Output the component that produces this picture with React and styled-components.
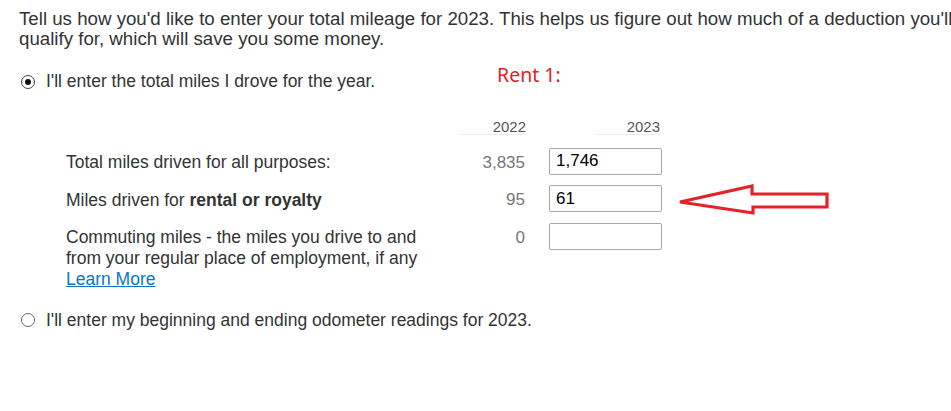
import React from "react";
import styled, { createGlobalStyle } from "styled-components";

const GlobalStyle = createGlobalStyle`
  html, body { margin: 0; padding: 0; background: #ffffff; overflow: hidden; }
  body { font-family: "Liberation Sans", Arial, sans-serif; color: #333333; }
`;

const Page = styled.div`
  position: relative;
  width: 951px;
  height: 411px;
  padding: 9px 0 0 19px;
  box-sizing: border-box;
  overflow: hidden;
`;

const Intro = styled.p`
  margin: 0;
  font-size: 18.7px;
  line-height: 20px;
  white-space: nowrap;
`;

const RadioRow = styled.label`
  display: flex;
  align-items: center;
  height: 20px;
  margin-top: ${(p) => p.$top}px;
  font-size: 17.5px;
  line-height: 20px;
`;

const RadioCircle = styled.span`
  box-sizing: border-box;
  width: 14px;
  height: 14px;
  border-radius: 50%;
  border: 1px solid ${(p) => (p.$checked ? "#444" : "#666")};
  margin: ${(p) => (p.$checked ? "1px" : "0")} 11px 0 2px;
  display: flex;
  align-items: center;
  justify-content: center;
  flex: none;
  &::after {
    content: "";
    width: 6px;
    height: 6px;
    border-radius: 50%;
    background: #111;
    display: ${(p) => (p.$checked ? "block" : "none")};
  }
`;

const Table = styled.div`
  display: grid;
  grid-template-columns: 371px 66px 113px;
  column-gap: 23px;
  row-gap: 10.5px;
  margin: 28px 0 0 47px;
  align-items: start;
`;

const HeadCell = styled.div`
  grid-column: ${(p) => p.$col};
  justify-self: end;
  width: ${(p) => p.$w}px;
  margin-right: ${(p) => p.$mr || 0}px;
  text-align: right;
  font-size: 15px;
  line-height: 15px;
  color: #555;
  border-bottom: 1px solid #ececec;
  margin-bottom: 2px;
`;

const Label = styled.div`
  grid-column: 1;
  font-size: 17.5px;
  line-height: 21px;
  padding-top: 4.5px;
  color: #333;
  white-space: nowrap;
  b { font-weight: bold; }
`;

const Prior = styled.div`
  grid-column: 2;
  text-align: right;
  font-size: 17px;
  line-height: 21px;
  padding-top: 4px;
  padding-right: 1px;
  color: #777;
`;

const Input = styled.input`
  grid-column: 3;
  box-sizing: border-box;
  width: 113px;
  height: 27px;
  border: 1px solid #a8a8a8;
  border-radius: 2px;
  padding: 0 6px;
  font-family: "Liberation Sans", Arial, sans-serif;
  font-size: 17px;
  color: #000;
  background: #fff;
  outline: none;
`;

const Link = styled.a`
  color: #0a77c6;
  text-decoration: underline;
`;

const Annotation = styled.div`
  position: absolute;
  left: 497px;
  top: 64px;
  font-family: "Noto Sans", "Open Sans", sans-serif;
  font-size: 19.5px;
  line-height: 22px;
  color: #e2202c;
`;

const ArrowSvg = styled.svg`
  position: absolute;
  left: 678px;
  top: 184px;
`;

export default function App() {
  return (
    <>
      <GlobalStyle />
      <Page>
        <Intro>
          Tell us how you'd like to enter your total mileage for 2023. This helps us figure out how much of a deduction you'll
          <br />
          qualify for, which will save you some money.
        </Intro>
        <RadioRow $top={22}>
          <RadioCircle $checked />
          I'll enter the total miles I drove for the year.
        </RadioRow>
        <Table>
          <HeadCell $col={2} $w={66}>2022</HeadCell>
          <HeadCell $col={3} $w={64} $mr={2}>2023</HeadCell>

          <Label>Total miles driven for all purposes:</Label>
          <Prior>3,835</Prior>
          <Input defaultValue="1,746" />

          <Label>
            Miles driven for <b>rental or royalty</b>
          </Label>
          <Prior>95</Prior>
          <Input defaultValue="61" />

          <Label>
            Commuting miles - the miles you drive to and
            <br />
            from your regular place of employment, if any
            <br />
            <Link href="#">Learn More</Link>
          </Label>
          <Prior>0</Prior>
          <Input defaultValue="" />
        </Table>
        <RadioRow $top={20}>
          <RadioCircle />
          I'll enter my beginning and ending odometer readings for 2023.
        </RadioRow>
        <Annotation>Rent 1:</Annotation>
        <ArrowSvg width="154" height="32" viewBox="0 0 154 32">
          <polygon
            points="2,18 74,2 74,10 149,10 149,23 75,23 75,29"
            fill="none"
            stroke="#e3222a"
            strokeWidth="3.2"
            strokeLinejoin="miter"
          />
        </ArrowSvg>
      </Page>
    </>
  );
}
